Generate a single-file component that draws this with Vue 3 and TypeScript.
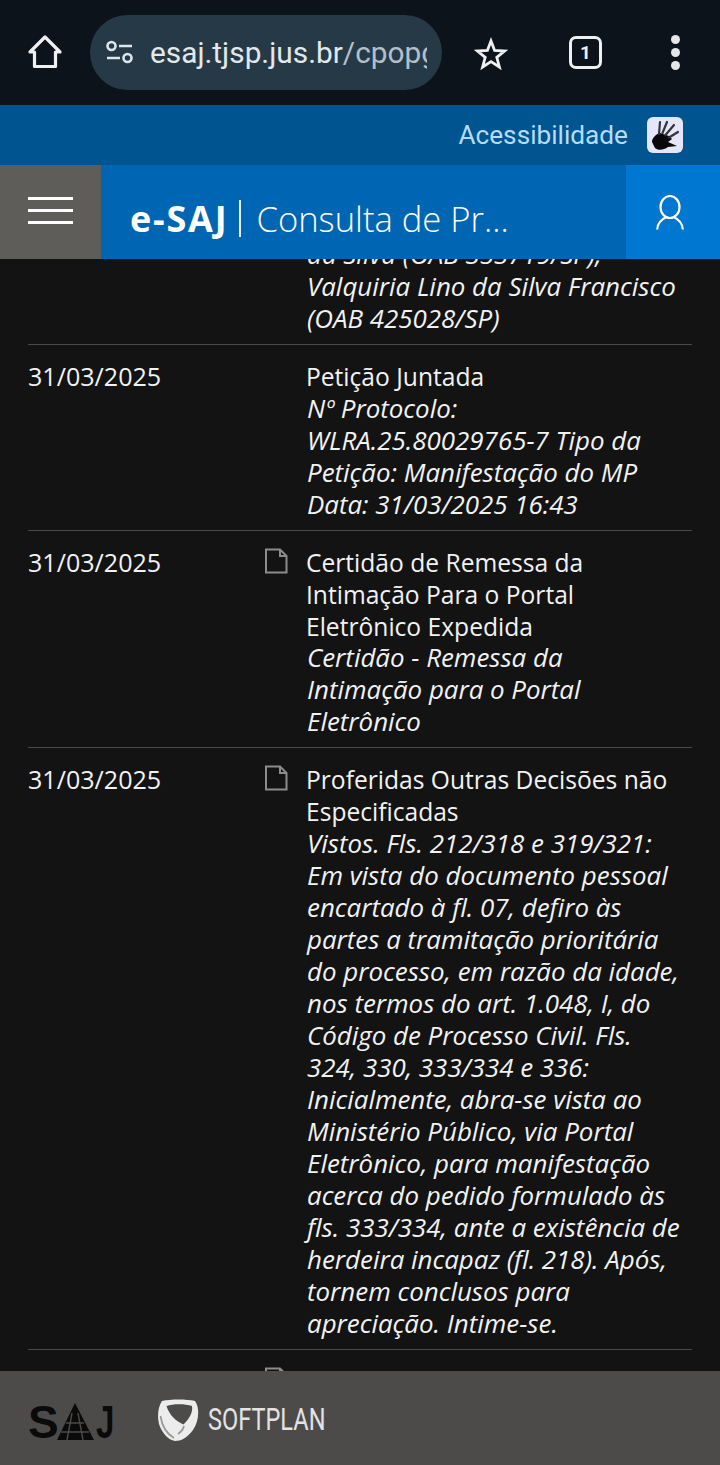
<script setup lang="ts">
interface Row { date: string; doc: boolean; title: string[]; desc: string[] }
const rows: Row[] = [
  { date: '', doc: false, title: [], desc: ['da Silva (OAB 353719/SP),', 'Valquiria Lino da Silva Francisco', '(OAB 425028/SP)'] },
  { date: '31/03/2025', doc: false, title: ['Petição Juntada'], desc: ['Nº Protocolo:', 'WLRA.25.80029765-7 Tipo da', 'Petição: Manifestação do MP', 'Data: 31/03/2025 16:43'] },
  { date: '31/03/2025', doc: true, title: ['Certidão de Remessa da', 'Intimação Para o Portal', 'Eletrônico Expedida'], desc: ['Certidão - Remessa da', 'Intimação para o Portal', 'Eletrônico'] },
  { date: '31/03/2025', doc: true, title: ['Proferidas Outras Decisões não', 'Especificadas'], desc: ['Vistos. Fls. 212/318 e 319/321:', 'Em vista do documento pessoal', 'encartado à fl. 07, defiro às', 'partes a tramitação prioritária', 'do processo, em razão da idade,', 'nos termos do art. 1.048, I, do', 'Código de Processo Civil. Fls.', '324, 330, 333/334 e 336:', 'Inicialmente, abra-se vista ao', 'Ministério Público, via Portal', 'Eletrônico, para manifestação', 'acerca do pedido formulado às', 'fls. 333/334, ante a existência de', 'herdeira incapaz (fl. 218). Após,', 'tornem conclusos para', 'apreciação. Intime-se.'] },
  { date: '', doc: true, title: [], desc: [] },
]
</script>

<template>
  <div class="page">
    <header class="chrome">
      <svg class="home" width="36" height="36" viewBox="0 0 36 36" fill="none" stroke="#eef0f2" stroke-width="3.2" stroke-linejoin="round"><path d="M18 3 L33 18 H28.5 V32.5 H7.5 V18 H3 Z" /></svg>
      <div class="omnibox">
        <svg width="30" height="24" viewBox="0 0 30 24" fill="none" stroke="#dfe6ea" stroke-width="2.6"><circle cx="6.5" cy="6" r="4" /><path d="M14 6 H27 M2 18 H15" /><circle cx="22.5" cy="18" r="4" /></svg>
        <div class="url"><span class="host">esaj.tjsp.jus.br</span><span class="path">/cpopg/show.do</span></div>
      </div>
      <svg class="star" width="34" height="34" viewBox="0 0 34 34" fill="none" stroke="#eef0f2" stroke-width="2.8" stroke-linejoin="miter"><path d="M17 4 L20.6 13.4 L30.6 14 L22.8 20.3 L25.4 30 L17 24.6 L8.6 30 L11.2 20.3 L3.4 14 L13.4 13.4 Z" /></svg>
      <div class="tabs">1</div>
      <div class="dots"><i></i><i></i><i></i></div>
    </header>

    <div class="access">
      <span>Acessibilidade</span>
      <div class="hand">
        <svg width="36" height="36" viewBox="0 0 36 36">
          <path d="M5 25 C5 21 9 17 13 16 L22 19 L25 22 L21 25 L30 29 L21 30 C17 33 11 34 8 31 Z" fill="#08080c" />
          <path d="M12 17 L13 5 M15.5 16 L20 5 M18.5 18 L27 8 M22 20.5 L31 15" stroke="#33333c" stroke-width="2.2" stroke-linecap="round" fill="none" />
        </svg>
      </div>
    </div>

    <nav class="nav">
      <div class="burger"><i></i><i></i><i></i></div>
      <div class="title"><b>e-SAJ</b><span class="sep"></span><span class="sub">Consulta de Pr...</span></div>
      <div class="user">
        <svg width="28" height="36" viewBox="0 0 28 36" fill="none" stroke="#fff" stroke-width="2.2"><ellipse cx="14" cy="12" rx="9.5" ry="11" /><path d="M1.2 34.5 C1.5 28 6 24 10.5 22 M26.8 34.5 C26.5 28 22 24 17.5 22" /></svg>
      </div>
    </nav>

    <main class="content">
      <div class="list">
        <section v-for="(row, i) in rows" :key="i" class="row">
          <div class="date">{{ row.date }}</div>
          <div class="icon">
            <svg v-if="row.doc" width="24" height="26" viewBox="0 0 24 26" fill="none" stroke="#8c8c8c" stroke-width="2"><path d="M2 1.5 H16 L22.5 8 V24.5 H2 Z M16 1.5 V8 H22.5" /></svg>
          </div>
          <div class="text">
            <div v-for="t in row.title" :key="t">{{ t }}</div>
            <em v-for="d in row.desc" :key="d">{{ d }}</em>
          </div>
        </section>
      </div>
    </main>

    <footer class="footer">
      <div class="saj">
        <span class="s">S</span>
        <svg width="38" height="38" viewBox="0 0 38 38"><path d="M19 0 L38 37 H1 Z" fill="#0a0a0a" /><path d="M16 10 L11 37 M22 10 L27 37 M10 20 H28 M5 29 H33" stroke="#4c4b4a" stroke-width="1.4" /></svg>
        <span class="j">J</span>
      </div>
      <div class="soft">
        <svg width="42" height="42" viewBox="0 0 42 42">
          <path d="M5 2 C14 0 29 0 38 2 C43 9 42 22 36 31 C30 39 24 42 18 42 C11 41 5 34 2 25 C0 17 1 8 5 2 Z" fill="#ececec" />
          <path d="M9.5 7 C16 4.5 28 4.5 35 7 C36 13 33 19 26.5 25.5 C20 23 12 16 9.5 7 Z" fill="#4c4b4a" />
          <path d="M3.5 17 C5 27 10 35 17 39 M27 27 C26 31 24 33 21 35" stroke="#9a9a9a" stroke-width="1.8" fill="none" />
        </svg>
        <span>SOFTPLAN</span>
      </div>
    </footer>
  </div>
</template>

<style>
html, body { margin: 0; background: #131313; }
</style>

<style scoped>
.page {
  width: 720px;
  height: 1465px;
  display: flex;
  flex-direction: column;
  overflow: hidden;
  background: #131313;
  color: #f2f2f2;
  font-family: "Open Sans", "Noto Sans", sans-serif;
}
.chrome {
  height: 105px;
  flex: none;
  display: flex;
  align-items: center;
  background: #0d131a;
  padding: 0 0 0 27px;
  box-sizing: border-box;
}
.home { margin-top: -2px; }
.omnibox {
  width: 352px;
  height: 75px;
  margin: -1px 0 0 27px;
  border-radius: 38px;
  background: #253a46;
  display: flex;
  align-items: center;
  padding-left: 15px;
  box-sizing: border-box;
  gap: 15px;
}
.url {
  width: 277px;
  overflow: hidden;
  white-space: nowrap;
  font-family: Roboto, sans-serif;
  font-size: 29.8px;
}
.host { color: #e3e8eb; }
.path { color: #b4c0c7; }
.star { margin-left: 32px; margin-top: 2px; }
.tabs {
  width: 27px;
  height: 27px;
  margin-left: 61px;
  border: 3px solid #eef0f2;
  border-radius: 7px;
  font: 700 19px/27px Roboto, sans-serif;
  text-align: center;
  color: #eef0f2;
}
.dots {
  margin-left: 69px;
  display: flex;
  flex-direction: column;
  gap: 4px;
}
.dots i {
  width: 9px;
  height: 9px;
  border-radius: 50%;
  background: #e4e6e8;
}
.access {
  height: 60px;
  flex: none;
  background: #005490;
  display: flex;
  align-items: center;
  justify-content: flex-end;
  padding-right: 37px;
  box-sizing: border-box;
  font-family: Roboto, sans-serif;
  font-size: 26.2px;
  color: #b6dcf7;
  gap: 19px;
}
.hand {
  width: 36px;
  height: 36px;
  border-radius: 6px;
  background: #e6e6fa;
  overflow: hidden;
  line-height: 0;
}
.nav {
  height: 94px;
  flex: none;
  display: flex;
  background: #0065b3;
}
.burger {
  width: 101px;
  background: #5f5d5a;
  display: flex;
  flex-direction: column;
  align-items: center;
  justify-content: center;
  gap: 9px;
  padding-bottom: 4px;
  box-sizing: border-box;
}
.burger i {
  width: 45px;
  height: 3px;
  background: #fff;
}
.title {
  flex: 1;
  display: flex;
  align-items: center;
  padding: 13px 0 0 29px;
  color: #fff;
  font-size: 34.6px;
  white-space: nowrap;
  box-sizing: border-box;
}
.title b {
  font-weight: 700;
  font-size: 36px;
  letter-spacing: 1.8px;
}
.sep {
  width: 2px;
  height: 37px;
  margin: 0 15px 0 11px;
  background: #e6f1fa;
}
.sub { font-weight: 300; }
.user {
  width: 94px;
  background: #0077d1;
  display: flex;
  align-items: center;
  justify-content: center;
  padding: 2px 6px 0 0;
  box-sizing: border-box;
}
.content {
  flex: 1;
  min-height: 0;
  overflow: hidden;
}
.list {
  margin: -36px 28px 0;
}
.row {
  display: grid;
  grid-template-columns: 236px 42px 1fr;
  padding: 16px 0 9px;
  border-bottom: 1px solid #4a4a4a;
  font-size: 24.6px;
  line-height: 31.95px;
}
.row:last-child { border-bottom: 0; }
.date { font-size: 25.1px; }
.icon { padding-top: 1px; height: 26px; line-height: 0; }
.text em {
  display: block;
  white-space: nowrap;
  font-style: italic;
  font-size: 25.9px;
  margin-left: 1px;
}
.text div { white-space: nowrap; }
.footer {
  height: 94px;
  flex: none;
  background: #4c4b4a;
  display: flex;
  align-items: center;
  padding: 8px 0 0 28px;
  box-sizing: border-box;
  gap: 44px;
}
.saj {
  display: flex;
  align-items: flex-end;
  color: #0a0a0a;
  font: 700 46px/38px "Liberation Sans", sans-serif;
  height: 38px;
  width: 85px;
  flex: none;
}
.saj > * { flex: none; }
.saj .s { width: 28px; }
.saj .j {
  display: inline-block;
  transform: scaleX(0.72);
  transform-origin: left bottom;
  margin-left: 2px;
}
.soft {
  display: flex;
  align-items: center;
  gap: 9px;
  margin-top: -4px;
  color: #e3e3e3;
  font: 400 31px/42px Roboto, sans-serif;
}
.soft span {
  display: inline-block;
  white-space: nowrap;
  transform: scaleX(0.76);
  transform-origin: left center;
}
</style>
